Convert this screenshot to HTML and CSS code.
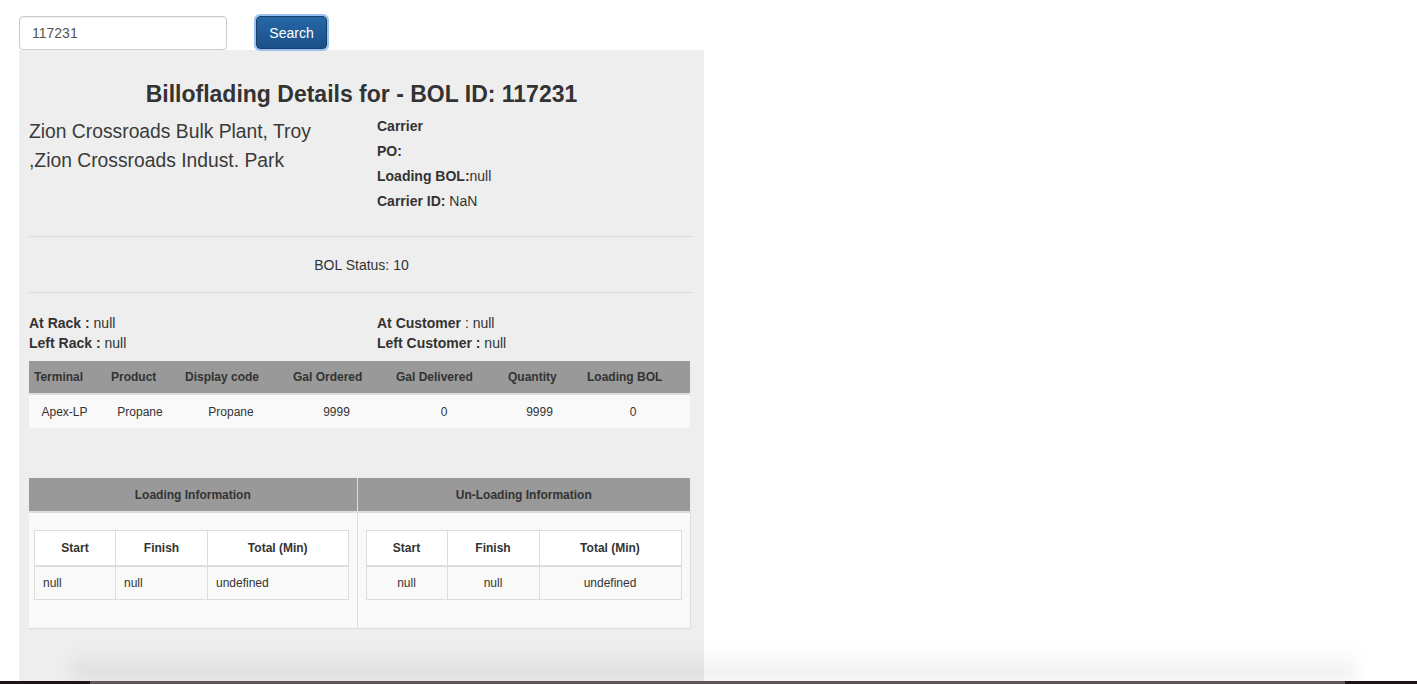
FILE: index.html
```html
<!DOCTYPE html>
<html>
<head>
<meta charset="utf-8">
<title>Bill of Lading</title>
<link rel="stylesheet" href="styles.css">
</head>
<body>
<div class="page">
  <div class="search-row">
    <input class="search-input" type="text" value="117231">
    <button class="search-btn" type="button">Search</button>
  </div>
  <div class="panel">
    <h3 class="title">Billoflading Details for - BOL ID: 117231</h3>
    <div class="info-row">
      <div class="address">Zion Crossroads Bulk Plant, Troy ,Zion Crossroads Indust. Park</div>
      <div class="carrier">
        <div><b>Carrier</b></div>
        <div><b>PO:</b></div>
        <div><b>Loading BOL:</b>null</div>
        <div><b>Carrier ID:</b> NaN</div>
      </div>
    </div>
    <hr class="rule rule-top">
    <div class="status">BOL Status: 10</div>
    <hr class="rule">
    <div class="times">
      <div>
        <div><b>At Rack :</b> null</div>
        <div><b>Left Rack :</b> null</div>
      </div>
      <div>
        <div><b>At Customer</b> : null</div>
        <div><b>Left Customer :</b> null</div>
      </div>
    </div>
    <table class="products">
      <colgroup>
        <col style="width:77px"><col style="width:74px"><col style="width:108px"><col style="width:103px"><col style="width:112px"><col style="width:79px"><col style="width:108px">
      </colgroup>
      <thead>
        <tr><th>Terminal</th><th>Product</th><th>Display code</th><th>Gal Ordered</th><th>Gal Delivered</th><th>Quantity</th><th>Loading BOL</th></tr>
      </thead>
      <tbody>
        <tr><td>Apex-LP</td><td>Propane</td><td>Propane</td><td>9999</td><td>0</td><td>9999</td><td>0</td></tr>
      </tbody>
    </table>
    <table class="loading">
      <colgroup><col style="width:328px"><col style="width:333px"></colgroup>
      <thead>
        <tr><th>Loading Information</th><th>Un-Loading Information</th></tr>
      </thead>
      <tbody>
        <tr>
          <td class="cell-left">
            <table class="inner inner-left">
              <colgroup><col style="width:81px"><col style="width:92px"><col></colgroup>
              <thead><tr><th>Start</th><th>Finish</th><th>Total (Min)</th></tr></thead>
              <tbody><tr><td>null</td><td>null</td><td>undefined</td></tr></tbody>
            </table>
          </td>
          <td class="cell-right">
            <table class="inner inner-right">
              <colgroup><col style="width:81px"><col style="width:92px"><col></colgroup>
              <thead><tr><th>Start</th><th>Finish</th><th>Total (Min)</th></tr></thead>
              <tbody><tr><td>null</td><td>null</td><td>undefined</td></tr></tbody>
            </table>
          </td>
        </tr>
      </tbody>
    </table>
  </div>
</div>
<div class="window-shadow"></div>
<div class="screen-edge"></div>
</body>
</html>
```
FILE: styles.css
```css
html, body {
  margin: 0;
  padding: 0;
  background: #fff;
  height: 100%;
  overflow: hidden;
}
body {
  font-family: "Liberation Sans", Arial, sans-serif;
  font-size: 14px;
  color: #333;
}
.page {
  padding-left: 19px;
}
.search-row {
  display: flex;
  align-items: center;
  gap: 29px;
  padding-top: 16px;
  height: 34px;
}
.search-input {
  box-sizing: border-box;
  width: 208px;
  height: 34px;
  border: 1px solid #ccc;
  border-radius: 4px;
  padding: 0 12px;
  font-family: "Liberation Sans", Arial, sans-serif;
  font-size: 14px;
  color: #555;
  background: #fff;
  box-shadow: inset 0 1px 1px rgba(0,0,0,.075);
  outline: none;
}
.search-btn {
  box-sizing: border-box;
  width: 71px;
  height: 33px;
  margin-top: -1px;
  border: 1px solid #173f69;
  border-radius: 4px;
  background: linear-gradient(to bottom, #2567a6, #1b5189);
  color: #fff;
  font-family: "Liberation Sans", Arial, sans-serif;
  font-size: 14px;
  box-shadow: 0 0 0 2px rgba(120, 175, 240, .75);
  padding: 0;
}
.panel {
  width: 665px;
  background: #eee;
  padding: 0 10px;
  min-height: 640px;
}
.title {
  margin: 0;
  padding-top: 31px;
  text-align: center;
  font-size: 23px;
  font-weight: bold;
  line-height: 26px;
  color: #333;
}
.info-row {
  display: grid;
  grid-template-columns: 348px 1fr;
  margin-top: 10px;
}
.address {
  font-size: 19.3px;
  line-height: 29px;
  color: #3a3a3a;
  padding-right: 30px;
}
.carrier {
  line-height: 25px;
  margin-top: -3px;
}
.rule {
  border: 0;
  border-top: 1px solid #d8d8d8;
  margin: 0;
  width: 664px;
}
.rule-top {
  margin-top: 22px;
}
.status {
  text-align: center;
  line-height: 20px;
  padding: 18px 0 17px;
}
.times {
  display: grid;
  grid-template-columns: 348px 1fr;
  line-height: 20px;
  margin-top: 20px;
}
.products {
  border-collapse: collapse;
  table-layout: fixed;
  width: 661px;
  margin-top: 8px;
  font-size: 12px;
}
.products th {
  background: #999;
  color: #333;
  font-weight: bold;
  text-align: left;
  height: 32px;
  padding: 0 0 0 5px;
  border-bottom: 2px solid #ddd;
}
.products td {
  background: #f9f9f9;
  height: 33px;
  text-align: center;
  padding: 0 6px 0 0;
}
.loading {
  border-collapse: collapse;
  table-layout: fixed;
  width: 661px;
  margin-top: 50px;
  font-size: 12px;
}
.loading > thead > tr > th {
  background: #999;
  color: #333;
  font-weight: bold;
  text-align: center;
  height: 33px;
  padding: 0;
  border-bottom: 2px solid #ddd;
  border-left: 1px solid #ddd;
}
.loading > thead > tr > th:first-child {
  border-left: 0;
}
.loading > tbody > tr > td {
  background: #f9f9f9;
  vertical-align: top;
  border: 1px solid #ddd;
  border-top: 0;
  padding: 17px 8px 28px 8px;
}
.loading > tbody > tr > td.cell-left {
  border-left: 0;
  padding-left: 5px;
}
.inner {
  border-collapse: collapse;
  table-layout: fixed;
  width: 100%;
  font-size: 12px;
}
.inner th {
  background: #fff;
  font-weight: bold;
  text-align: center;
  height: 34px;
  padding: 0;
  border: 1px solid #ddd;
  border-bottom: 2px solid #ddd;
}
.inner td {
  background: #f9f9f9;
  height: 32px;
  padding: 0 8px;
  border: 1px solid #ddd;
}
.inner-left td {
  text-align: left;
}
.inner-right td {
  text-align: center;
}
.window-shadow {
  position: fixed;
  left: 70px;
  right: 60px;
  bottom: 3px;
  height: 34px;
  background: linear-gradient(to bottom, rgba(0,0,0,0), rgba(0,0,0,.07));
  filter: blur(8px);
  pointer-events: none;
}
.screen-edge {
  position: fixed;
  left: 0;
  right: 0;
  bottom: 0;
  height: 3px;
  background: linear-gradient(to right, #1c1416 0, #1c1416 90px, #5e545a 90px, #5e545a 1345px, #1c1416 1345px);
  pointer-events: none;
}
```
